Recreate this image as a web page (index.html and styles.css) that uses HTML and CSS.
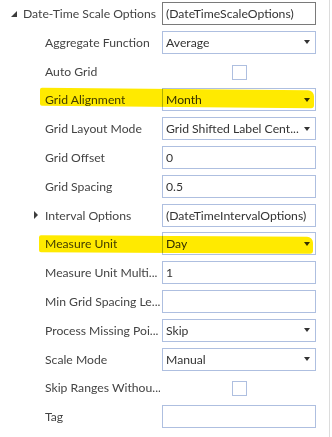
FILE: index.html
```html
<!DOCTYPE html>
<html>
<head>
<meta charset="utf-8">
<link rel="stylesheet" href="styles.css">
</head>
<body>
<div class="grid">
  <div class="row">
    <div class="name lvl0"><span class="tri open"></span><span class="txt">Date-Time Scale Options</span></div>
    <div class="val"><div class="box dark">(DateTimeScaleOptions)</div></div>
  </div>
  <div class="row">
    <div class="name lvl1"><span class="txt">Aggregate Function</span></div>
    <div class="val"><div class="box combo"><span class="vt">Average</span><span class="arrow"></span></div></div>
  </div>
  <div class="row">
    <div class="name lvl1"><span class="txt">Auto Grid</span></div>
    <div class="val center"><div class="check"></div></div>
  </div>
  <div class="row">
    <div class="hl hl1"></div>
    <div class="name lvl1"><span class="txt">Grid Alignment</span></div>
    <div class="val"><div class="box combo"><span class="vt">Month</span><span class="arrow"></span></div></div>
  </div>
  <div class="row">
    <div class="name lvl1"><span class="txt">Grid Layout Mode</span></div>
    <div class="val"><div class="box combo"><span class="vt">Grid Shifted Label Cent...</span><span class="arrow"></span></div></div>
  </div>
  <div class="row">
    <div class="name lvl1"><span class="txt">Grid Offset</span></div>
    <div class="val"><div class="box">0</div></div>
  </div>
  <div class="row">
    <div class="name lvl1"><span class="txt">Grid Spacing</span></div>
    <div class="val"><div class="box">0.5</div></div>
  </div>
  <div class="row">
    <div class="name lvl1x"><span class="tri closed"></span><span class="txt">Interval Options</span></div>
    <div class="val"><div class="box">(DateTimeIntervalOptions)</div></div>
  </div>
  <div class="row">
    <div class="hl hl2"></div>
    <div class="name lvl1"><span class="txt">Measure Unit</span></div>
    <div class="val"><div class="box combo"><span class="vt">Day</span><span class="arrow"></span></div></div>
  </div>
  <div class="row">
    <div class="name lvl1"><span class="txt">Measure Unit Multi...</span></div>
    <div class="val"><div class="box">1</div></div>
  </div>
  <div class="row">
    <div class="name lvl1"><span class="txt">Min Grid Spacing Le...</span></div>
    <div class="val"><div class="box"></div></div>
  </div>
  <div class="row">
    <div class="name lvl1"><span class="txt">Process Missing Poi...</span></div>
    <div class="val"><div class="box combo"><span class="vt">Skip</span><span class="arrow"></span></div></div>
  </div>
  <div class="row">
    <div class="name lvl1"><span class="txt">Scale Mode</span></div>
    <div class="val"><div class="box combo"><span class="vt">Manual</span><span class="arrow"></span></div></div>
  </div>
  <div class="row">
    <div class="name lvl1"><span class="txt">Skip Ranges Withou...</span></div>
    <div class="val center"><div class="check"></div></div>
  </div>
  <div class="row">
    <div class="name lvl1"><span class="txt">Tag</span></div>
    <div class="val"><div class="box"></div></div>
  </div>
</div>
</body>
</html>
```
FILE: styles.css
```css
html, body {
  margin: 0;
  padding: 0;
  background: #ffffff;
}
body {
  font-family: Lato, "Open Sans", sans-serif;
  font-size: 12.2px;
  color: #444444;
}
.grid {
  width: 329px;
  height: 437px;
  border-right: 1px solid #dcdcdc;
  display: flex;
  flex-direction: column;
  overflow: hidden;
}
.row {
  position: relative;
  height: 28.8px;
  flex: none;
  display: grid;
  grid-template-columns: 162px 154px;
}
.name {
  display: flex;
  align-items: center;
  height: 27px;
  min-width: 0;
  padding-right: 2px;
  position: relative;
  z-index: 1;
}
.lvl0 { padding-left: 11px; }
.lvl1 { padding-left: 45px; }
.lvl1x { padding-left: 33px; }
.txt {
  white-space: nowrap;
  overflow: hidden;
  min-width: 0;
}
.tri {
  flex: none;
  width: 12px;
  height: 8px;
  position: relative;
}
.tri.open::before {
  content: "";
  position: absolute;
  left: 0;
  top: 1px;
  border-left: 6px solid transparent;
  border-bottom: 6px solid #3c3c3c;
}
.tri.closed::before {
  content: "";
  position: absolute;
  left: 1px;
  top: 0;
  border-top: 4px solid transparent;
  border-bottom: 4px solid transparent;
  border-left: 4px solid #3c3c3c;
}
.val {
  padding-top: 2px;
  position: relative;
  z-index: 1;
}
.val.center {
  display: flex;
  justify-content: center;
  padding-top: 7px;
}
.box {
  box-sizing: border-box;
  height: 23px;
  border: 1px solid #aebfe0;
  padding: 0 5px 0 3px;
  display: flex;
  align-items: center;
  color: #333333;
  white-space: nowrap;
  overflow: hidden;
}
.box.dark { border-color: #7a7a7a; }
.combo { justify-content: space-between; }
.vt { overflow: hidden; }
.arrow {
  flex: none;
  margin-right: 0;
  border-left: 3.5px solid transparent;
  border-right: 3.5px solid transparent;
  border-top: 4px solid #333333;
}
.check {
  box-sizing: border-box;
  width: 15px;
  height: 15px;
  border: 1px solid #aebfe0;
  background: #ffffff;
}
.hl {
  position: absolute;
  z-index: 2;
  background: #ffea00;
  mix-blend-mode: multiply;
  border-radius: 2px 6px 3px 2px;
}
.hl1 {
  left: 40px;
  top: 3px;
  width: 274px;
  height: 18px;
  transform: skewY(0.5deg);
}
.hl2 {
  left: 39px;
  top: 6px;
  width: 274px;
  height: 17px;
  transform: skewY(0.3deg);
}
```
